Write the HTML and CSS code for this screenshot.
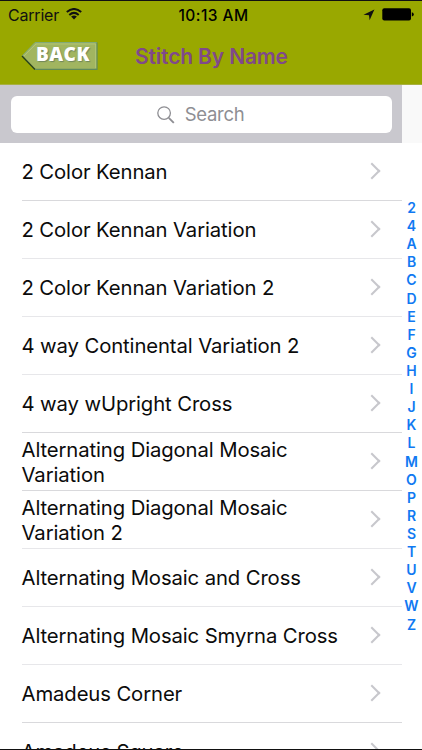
FILE: index.html
```html
<!DOCTYPE html>
<html lang="en">
<head>
<meta charset="utf-8">
<title>Stitch By Name</title>
<link rel="stylesheet" href="styles.css">
</head>
<body>
<div class="screen">
  <header class="header">
    <div class="status">
      <div class="carrier"><span>Carrier</span>
        <svg class="wifi" width="16" height="12" viewBox="0 0 16 12"><g fill="none" stroke="#111" stroke-width="2"><path d="M.8 4.1Q8-2.1 15.2 4.1"/><path d="M3.3 6.9Q8 2.9 12.7 6.9"/></g><path d="M5.1 8.6Q8 6.3 10.9 8.6L8 11.6Z" fill="#111"/></svg>
      </div>
      <time class="clock">10:13 AM</time>
      <div class="indicators">
        <svg width="12" height="12" viewBox="0 0 12 12"><path d="M11.4.5 6.6 11.3 6 6.2.5 5.7Z" fill="#111"/></svg>
        <svg width="32" height="13" viewBox="0 0 32 13"><rect x=".3" y=".2" width="28.7" height="12.4" rx="2" fill="#000"/><path d="M29.8 4.3Q31.8 4.8 31.8 6.4T29.8 8.5Z" fill="#000"/></svg>
      </div>
    </div>
    <nav class="nav">
      <a class="back">
        <svg width="77" height="30" viewBox="0 0 77 30"><path d="M1 15 14 1.5H76V28.5H14Z" fill="#a1b560"/><path d="M1 15 14 1.5H76" fill="none" stroke="#83aa77"/><path d="M1 15 14 28.5" fill="none" stroke="#27421c" stroke-width="1.4"/><path d="M14 28.3H76V1.5" fill="none" stroke="#5f8a5c" stroke-width="1.2"/><path d="M3 15 15 3H74.6V27" fill="none" stroke="#b5c77c" stroke-width=".8"/></svg>
        <span>BACK</span>
      </a>
      <h1>Stitch By Name</h1>
    </nav>
  </header>
  <div class="searchrow">
    <div class="searchbar"><div class="field">
      <svg width="18" height="18" viewBox="0 0 18 18" fill="none" stroke="#8e8e93"><circle cx="7.1" cy="7.1" r="6.3" stroke-width="1.3"/><path d="m11.8 11.8 5 5" stroke-width="1.9"/></svg>
      <span>Search</span></div></div>
  </div>
  <main class="content">
    <ul class="list">
      <li><span>2 Color Kennan</span><i></i></li>
      <li class="faint"><span>2 Color Kennan Variation</span><i></i></li>
      <li class="faint"><span>2 Color Kennan Variation 2</span><i></i></li>
      <li class="faint"><span>4 way Continental Variation 2</span><i></i></li>
      <li><span>4 way wUpright Cross</span><i></i></li>
      <li><span>Alternating Diagonal Mosaic<br>Variation</span><i></i></li>
      <li class="faint"><span>Alternating Diagonal Mosaic<br>Variation 2</span><i></i></li>
      <li class="faint"><span>Alternating Mosaic and Cross</span><i></i></li>
      <li class="faint"><span>Alternating Mosaic Smyrna Cross</span><i></i></li>
      <li><span>Amadeus Corner</span><i></i></li>
      <li><span>Amadeus Square</span><i></i></li>
    </ul>
    <div class="index">
      <b>2</b><b>4</b><b>A</b><b>B</b><b>C</b><b>D</b><b>E</b><b>F</b><b>G</b><b>H</b><b>I</b><b>J</b><b>K</b><b>L</b><b>M</b><b>O</b><b>P</b><b>R</b><b>S</b><b>T</b><b>U</b><b>V</b><b>W</b><b>Z</b>
    </div>
  </main>
</div>
</body>
</html>
```
FILE: styles.css
```css
* { box-sizing: border-box; }
body { margin: 0; background: #fff; font-family: Inter, "Liberation Sans", sans-serif; color: #0b0b0b; }
.screen { width: 422px; height: 750px; overflow: hidden; display: flex; flex-direction: column; border-top: 1px solid #111; border-bottom: 1px solid #111; }
.header { height: 84px; flex: none; background: #99a800; border-bottom: 1px solid #a8b040; }
.status { height: 27px; display: grid; grid-template-columns: 1fr auto 1fr; align-items: center; padding: 1px 8px 0; color: #111; }
.carrier { display: flex; align-items: center; gap: 7px; font-size: 16px; letter-spacing: -.2px; }
.wifi { margin-top: -3px; }
.clock { font-size: 15.5px; font-weight: 500; letter-spacing: .45px; color: #000; padding-left: 5px; }
.indicators { display: flex; justify-content: flex-end; align-items: center; gap: 7px; margin-top: -1px; }
.nav { height: 56px; display: flex; align-items: center; padding-left: 21px; }
.back { width: 77px; height: 30px; display: grid; margin-top: -1px; }
.back svg, .back span { grid-area: 1 / 1; }
.back span { padding-left: 15px; font: 800 19px/27px "Open Sans", sans-serif; letter-spacing: .5px; color: #fff; text-shadow: 1px 1px 1px #71875a; }
h1 { margin: 2px 0 0 37px; font-size: 21px; line-height: 26px; font-weight: 600; letter-spacing: -.15px; color: #80498a; white-space: nowrap; }
.searchrow { height: 58px; flex: none; display: flex; background: #f9f9f9; }
.searchbar { width: 402px; background: #c9c8ce; padding: 11px 10px 10px 11px; }
.field { height: 37px; border-radius: 6px; background: #fff; display: flex; justify-content: center; align-items: center; gap: 10px; padding-right: 2px; font-size: 18.5px; letter-spacing: -.3px; color: #8e8e93; }
.field span { margin-top: -2px; }
.content { flex: 1; min-height: 0; display: flex; }
.list { width: 402px; margin: 0; padding: 0 0 0 22px; list-style: none; }
.list li { height: 58px; border-bottom: 1px solid #d9d9dc; display: flex; align-items: center; justify-content: space-between; padding-right: 21px; }
.list .faint { border-bottom-color: #e7e7ea; }
.list span { font-size: 20.3px; line-height: 25px; letter-spacing: -.11px; margin-left: -.5px; white-space: nowrap; }
.list i { width: 12px; height: 12px; margin-bottom: 1px; border: solid #c7c7cc; border-width: 2px 2px 0 0; transform: translateX(-3px) rotate(45deg); }
.index { width: 20px; padding: 56px 1px 0 0; display: flex; flex-direction: column; align-items: center; }
.index b { height: 18.12px; flex: none; font-size: 14px; line-height: 18.1px; font-weight: 600; color: #1079f2; }
```
